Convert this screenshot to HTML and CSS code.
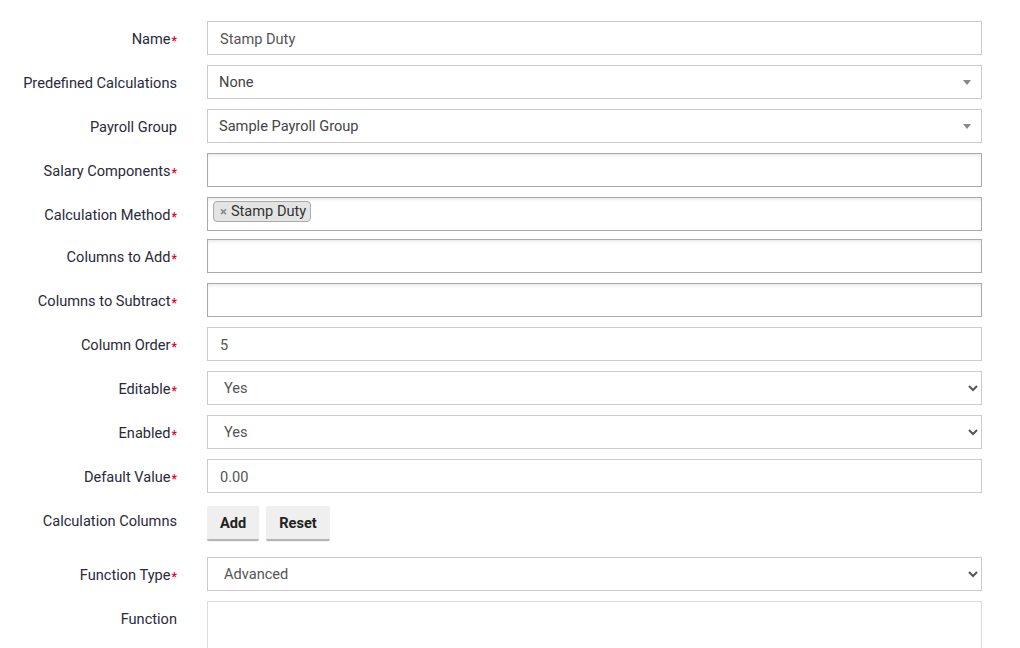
FILE: index.html
```html
<!DOCTYPE html>
<html>
<head>
<meta charset="utf-8">
<link rel="stylesheet" href="styles.css">
</head>
<body>
<form class="form">
  <div class="row">
    <label class="lbl">Name<span class="req">*</span></label>
    <input class="ctl" type="text" value="Stamp Duty">
  </div>
  <div class="row">
    <label class="lbl">Predefined Calculations</label>
    <div class="ctl s2">None<span class="tri"></span></div>
  </div>
  <div class="row">
    <label class="lbl">Payroll Group</label>
    <div class="ctl s2">Sample Payroll Group<span class="tri"></span></div>
  </div>
  <div class="row">
    <label class="lbl">Salary Components<span class="req">*</span></label>
    <div class="ctl multi"></div>
  </div>
  <div class="row row-tag">
    <label class="lbl">Calculation Method<span class="req">*</span></label>
    <div class="ctl multi tagbox"><span class="tag"><span class="x">×</span>Stamp Duty</span></div>
  </div>
  <div class="row">
    <label class="lbl">Columns to Add<span class="req">*</span></label>
    <div class="ctl multi"></div>
  </div>
  <div class="row">
    <label class="lbl">Columns to Subtract<span class="req">*</span></label>
    <div class="ctl multi"></div>
  </div>
  <div class="row">
    <label class="lbl">Column Order<span class="req">*</span></label>
    <input class="ctl" type="text" value="5">
  </div>
  <div class="row">
    <label class="lbl">Editable<span class="req">*</span></label>
    <select class="ctl sel"><option>Yes</option><option>No</option></select>
  </div>
  <div class="row">
    <label class="lbl">Enabled<span class="req">*</span></label>
    <select class="ctl sel"><option>Yes</option><option>No</option></select>
  </div>
  <div class="row">
    <label class="lbl">Default Value<span class="req">*</span></label>
    <input class="ctl" type="text" value="0.00">
  </div>
  <div class="row row-btns">
    <label class="lbl lbl-btn">Calculation Columns</label>
    <div class="btns">
      <button type="button" class="btn">Add</button>
      <button type="button" class="btn">Reset</button>
    </div>
  </div>
  <div class="row">
    <label class="lbl">Function Type<span class="req">*</span></label>
    <select class="ctl sel"><option>Advanced</option><option>Simple</option></select>
  </div>
  <div class="row">
    <label class="lbl lbl-top">Function</label>
    <textarea class="ctl area"></textarea>
  </div>
</form>
</body>
</html>
```

FILE: styles.css
```css
html, body {
  margin: 0;
  padding: 0;
  background: #fff;
}
body {
  font-family: Roboto, "Liberation Sans", sans-serif;
  font-size: 14.6px;
  color: #333;
}
.form {
  padding-top: 21px;
}
.row {
  display: grid;
  grid-template-columns: 177px 775px;
  column-gap: 30px;
  align-items: center;
  margin-bottom: 10px;
}
.lbl {
  text-align: right;
  color: #2a2a3a;
  font-size: 14.6px;
  line-height: 20px;
  padding-top: 2px;
  white-space: nowrap;
}
.lbl-top {
  align-self: start;
  padding-top: 8px;
}
.lbl-btn {
  align-self: start;
  padding-top: 5px;
}
.req {
  color: #e4002b;
  font-size: 12px;
  font-weight: bold;
  margin-left: 1px;
  position: relative;
  top: 1px;
}
.ctl {
  box-sizing: border-box;
  height: 34px;
  width: 775px;
  margin: 0;
  border: 1px solid #ccc;
  border-radius: 0;
  background: #fff;
  font-family: Roboto, "Liberation Sans", sans-serif;
  font-size: 14.6px;
  color: #555;
  padding: 7px 12px 5px;
  line-height: 20px;
  outline: none;
}
.s2 {
  position: relative;
  padding: 6px 11px;
  color: #444;
}
.tri {
  position: absolute;
  right: 10px;
  top: 14px;
  width: 0;
  height: 0;
  border-left: 4px solid transparent;
  border-right: 4px solid transparent;
  border-top: 5px solid #888;
}
.multi {
  border-color: #aaa;
  box-shadow: inset 0 3px 4px -2px rgba(0, 0, 0, 0.12);
}
.row-tag {
  margin-bottom: 8px;
}
.tagbox {
  padding: 3px 5px;
  display: flex;
  align-items: flex-start;
}
.tag {
  box-sizing: border-box;
  height: 21px;
  display: inline-flex;
  align-items: center;
  background: #e4e4e4;
  border: 1px solid #aaa;
  border-radius: 4px;
  padding: 0 4px 0 6px;
  color: #333;
  font-size: 14.6px;
  line-height: 19px;
}
.x {
  color: #888;
  font-weight: bold;
  font-size: 13px;
  margin-right: 4px;
}
.sel {
  padding: 6px 12px;
  color: #555;
}
.row-btns {
  margin-top: 13px;
  margin-bottom: 16px;
}
.btns {
  display: flex;
  gap: 7px;
}
.btn {
  box-sizing: border-box;
  height: 35px;
  padding: 6px 13px 5px;
  background: #efefef;
  border: none;
  border-bottom: 2px solid #b5b5b5;
  border-radius: 2px;
  font-family: Roboto, "Liberation Sans", sans-serif;
  font-size: 14.6px;
  font-weight: bold;
  color: #222;
  box-shadow: 0 1px 1px rgba(0, 0, 0, 0.05);
}
.area {
  height: 80px;
  border-color: #ddd;
  resize: none;
}
```
